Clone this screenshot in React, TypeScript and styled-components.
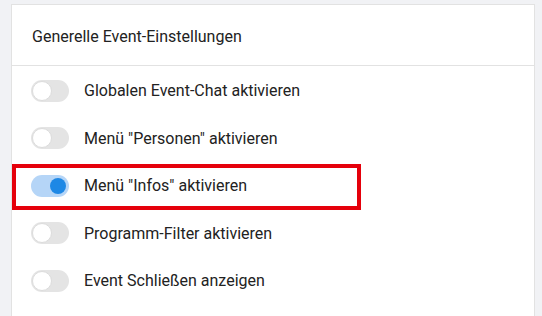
import styled, { createGlobalStyle } from "styled-components";

const GlobalStyle = createGlobalStyle`
  body {
    margin: 0;
    background: #f1f2f5;
    font-family: Roboto, "Noto Sans", sans-serif;
  }
`;

const Page = styled.div`
  padding: 4px 7px 0 11px;
  height: 312px;
  overflow: hidden;
`;

const Card = styled.section`
  background: #fff;
  border: 1px solid #e2e2e2;
  border-bottom: none;
  min-height: 320px;
`;

const CardHeader = styled.header`
  height: 61px;
  display: flex;
  align-items: center;
  padding: 2px 20px 0;
  box-sizing: border-box;
  border-bottom: 1px solid #e2e2e2;
  font-size: 16px;
  color: #222;
`;

const List = styled.div`
  display: flex;
  flex-direction: column;
  padding-top: 1px;
`;

const Row = styled.label<{ highlighted?: boolean }>`
  position: relative;
  height: 47.5px;
  display: flex;
  align-items: center;
  gap: 15px;
  padding-left: 19px;
  font-size: 16px;
  color: #222;

  ${(p) =>
    p.highlighted &&
    `
    &::after {
      content: "";
      position: absolute;
      left: 0;
      top: 2px;
      width: 349px;
      height: 46px;
      box-sizing: border-box;
      border: 4px solid #e5000b;
      pointer-events: none;
    }
  `}
`;

const Track = styled.span<{ on?: boolean }>`
  position: relative;
  width: 38px;
  height: 22px;
  border-radius: 11px;
  background: ${(p) => (p.on ? "#b5d5f7" : "#e4e4e4")};
  flex-shrink: 0;
`;

const Thumb = styled.span<{ on?: boolean }>`
  position: absolute;
  top: ${(p) => (p.on ? "3px" : "1px")};
  left: ${(p) => (p.on ? "19px" : "1px")};
  width: ${(p) => (p.on ? "16px" : "20px")};
  height: ${(p) => (p.on ? "16px" : "20px")};
  border-radius: 50%;
  box-sizing: border-box;
  background: ${(p) => (p.on ? "#1e88e5" : "#fff")};
  border: ${(p) => (p.on ? "none" : "1px solid #dcdcdc")};
`;

const items = [
  { label: "Globalen Event-Chat aktivieren", on: false },
  { label: 'Menü "Personen" aktivieren', on: false },
  { label: 'Menü "Infos" aktivieren', on: true, highlighted: true },
  { label: "Programm-Filter aktivieren", on: false },
  { label: "Event Schließen anzeigen", on: false },
];

export default function App() {
  return (
    <>
      <GlobalStyle />
      <Page>
        <Card>
          <CardHeader>Generelle Event-Einstellungen</CardHeader>
          <List>
            {items.map((item) => (
              <Row key={item.label} highlighted={item.highlighted}>
                <Track on={item.on}>
                  <Thumb on={item.on} />
                </Track>
                {item.label}
              </Row>
            ))}
          </List>
        </Card>
      </Page>
    </>
  );
}
